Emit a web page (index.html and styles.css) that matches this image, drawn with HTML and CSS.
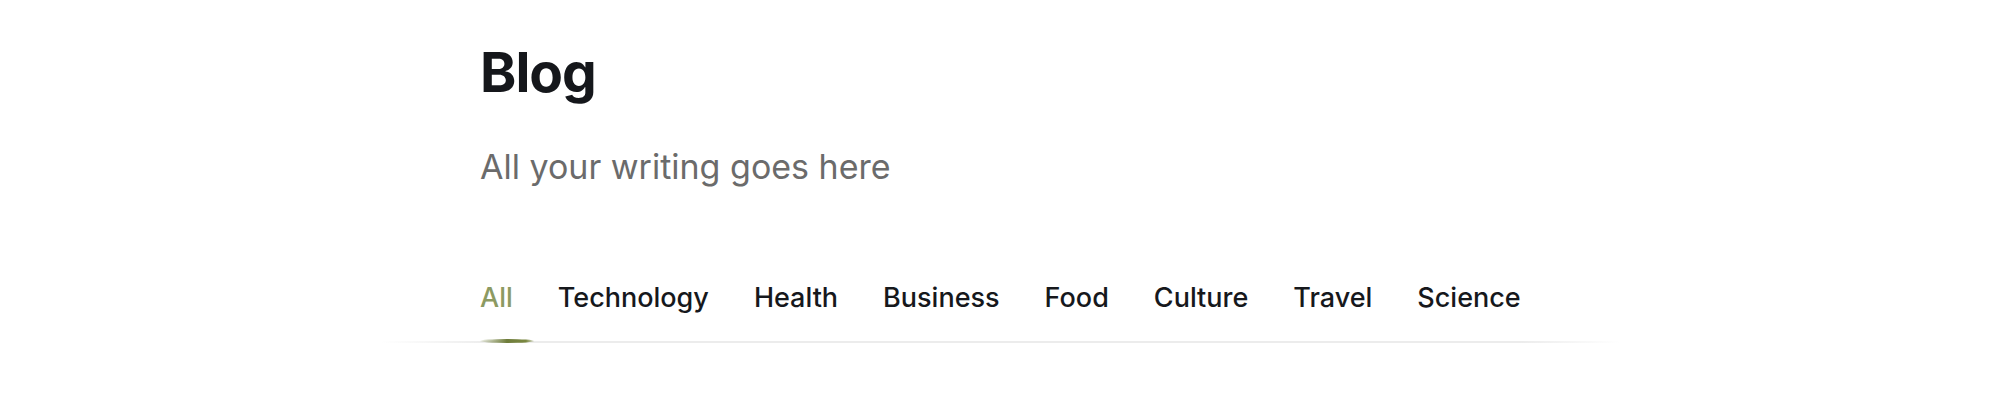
FILE: index.html
```html
<!DOCTYPE html>
<html>
<head>
<meta charset="utf-8">
<link rel="stylesheet" href="styles.css">
</head>
<body>
<main class="page">
  <header class="head">
    <h1 class="title">Blog</h1>
    <p class="subtitle">All your writing goes here</p>
  </header>
  <nav class="tabs">
    <a class="tab active">All</a>
    <a class="tab">Technology</a>
    <a class="tab">Health</a>
    <a class="tab">Business</a>
    <a class="tab">Food</a>
    <a class="tab">Culture</a>
    <a class="tab">Travel</a>
    <a class="tab">Science</a>
  </nav>
</main>
</body>
</html>
```
FILE: styles.css
```css
html, body { margin: 0; padding: 0; background: #fff; }
body { font-family: Inter, "Noto Sans", sans-serif; color: #16181c; }
.page { width: 1040px; margin: 0 auto; padding-top: 40px; }
.title { margin: 0; font-size: 55px; font-weight: 700; line-height: 64px; letter-spacing: -1px; color: #15171b; }
.subtitle { margin: 42px 0 0; font-size: 34px; line-height: 42px; color: #6b6b6b; font-weight: 400; }
.tabs { position: relative; display: flex; gap: 45px; margin-top: 93px; padding-bottom: 28px; }
.tabs::after { content: ""; position: absolute; left: -100px; right: -100px; bottom: 0; height: 2px;
  background: linear-gradient(90deg, rgba(236,236,236,0), #ececec 9%, #ececec 92%, rgba(236,236,236,0)); }
.tab { position: relative; font-size: 27px; line-height: 34px; color: #16181c; font-weight: 500; }
.tab.active { color: #8c9a62; }
.tab.active::after { content: ""; position: absolute; left: 0; width: 54px; bottom: -28px; height: 4px; z-index: 1;
  border-radius: 50%; background: linear-gradient(90deg, rgba(120,135,60,0.1), #6f7d3b 50%, #7a8740 85%, rgba(120,135,60,0.2)); }
```
